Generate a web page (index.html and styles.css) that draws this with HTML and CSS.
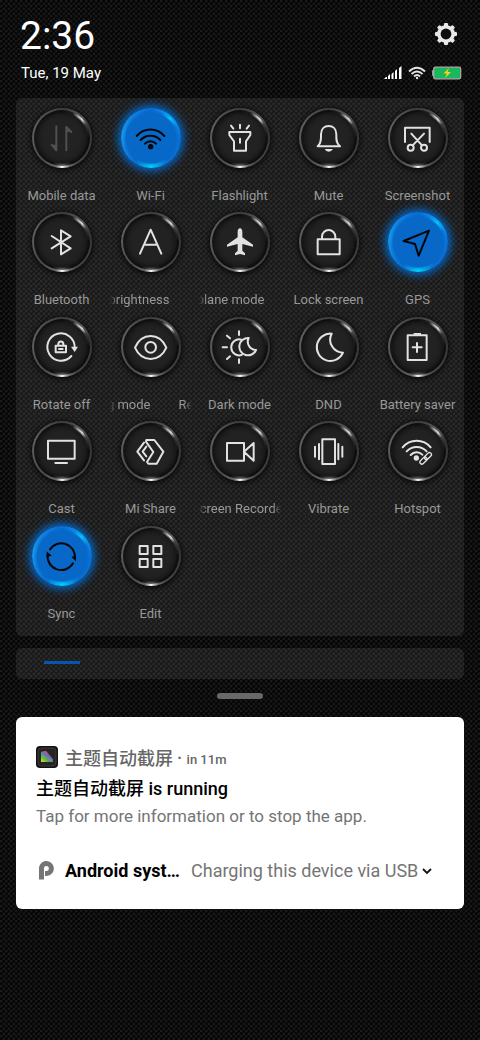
FILE: index.html
```html
<!DOCTYPE html>
<html lang="en">
<head>
<meta charset="utf-8">
<meta name="viewport" content="width=device-width, initial-scale=1">
<title>Control centre</title>
<link rel="stylesheet" href="styles.css">
</head>
<body>
<header class="status">
  <div class="status-row top">
    <h1 class="clock">2:36</h1>
    <button class="settings" type="button" aria-label="Settings">
      <svg viewBox="-12 -12 24 24" width="24" height="24">
        <g fill="#e8e8e8">
          <rect x="-2" y="-11" width="4" height="22" rx="1"/><rect x="-2" y="-11" width="4" height="22" rx="1" transform="rotate(45)"/><rect x="-2" y="-11" width="4" height="22" rx="1" transform="rotate(90)"/><rect x="-2" y="-11" width="4" height="22" rx="1" transform="rotate(135)"/>
          <circle r="9"/>
        </g>
        <circle r="5.400" fill="#0e0e0e"/>
      </svg>
    </button>
  </div>
  <div class="status-row">
    <p class="date">Tue, 19 May</p>
    <div class="indicators">
      <svg viewBox="0 0 18 14" width="18" height="14" fill="#fff"><path d="M0 13l2-2h1v2zM4 10l2-2v5H4zM7.500 8l2-2v7h-2zM11 5l2-2v10h-2zM15 2l2.500-2v13H15z"/></svg>
      <svg viewBox="0 0 18 14" width="18" height="14" fill="none" stroke="#e4e4e4" stroke-width="1.800"><path d="M1 5.500Q9-2 17 5.500M3.500 8Q9 3 14.500 8M6 10.500Q9 7.500 12 10.500"/><circle cx="9" cy="12" r="1.200" fill="#e4e4e4" stroke="none"/></svg>
      <svg viewBox="0 0 30 14" width="30" height="14"><rect x="0" y="4" width="3" height="6" rx="1" fill="#999"/><rect x="1.700" y="1.200" width="27" height="11.600" rx="1.500" fill="#19b85c" stroke="#b0aaa8" stroke-width="1.200"/><path d="M17 2l-5.500 5.500h3.500L13 12l6-6h-3.500z" fill="#ffd21e"/></svg>
    </div>
  </div>
</header>

<main>
<section class="panel tiles" aria-label="Quick settings">
  <button type="button" class="tile unavailable" aria-pressed="false"><span class="disc"><svg viewBox="-90 -90 180 180"><path d="M-17-35V37L-31 20M13 37V-33L28-18"/><path class="barb" d="M-31 20H-17V37ZM13-33L28-18H13Z"/></svg></span><span class="label">Mobile data</span></button>
  <button type="button" class="tile on" aria-pressed="true"><span class="disc"><svg viewBox="-90 -90 180 180"><path d="M-43-6A54 54 0 0 1 40-6M-31 6A41 41 0 0 1 28 6M-18 17A23 23 0 0 1 15 17"/><circle class="solid" cx="-1" cy="26" r="8"/></svg></span><span class="label">Wi-Fi</span></button>
  <button type="button" class="tile" aria-pressed="false"><span class="disc"><svg viewBox="-90 -90 180 180"><path d="M-32-18H31V-9L18 10V38H-18V10L-32-9ZM0 2V14M0-40V-29M-27-37L-20-28M27-37L20-28"/></svg></span><span class="label">Flashlight</span></button>
  <button type="button" class="tile" aria-pressed="false"><span class="disc"><svg viewBox="-90 -90 180 180"><path d="M-34 25C-22 14-24 2-24-11C-24-27-14-36-1-36S22-27 22-11C22 2 20 14 33 25Z"/><path class="solid" d="M-13 33H12Q7 41-1 41T-13 33"/></svg></span><span class="label">Mute</span></button>
  <button type="button" class="tile" aria-pressed="false"><span class="disc"><svg viewBox="-90 -90 180 180"><path d="M-39 12V-31H35V12M-16 22L18-13M12 22L-20-13"/><circle cx="-22" cy="29" r="9"/><circle cx="18" cy="29" r="9"/></svg></span><span class="label">Screenshot</span></button>

  <button type="button" class="tile" aria-pressed="false"><span class="disc"><svg viewBox="-90 -90 180 180"><path d="M-31-18L26 19L-3 37V-35L26-17L-31 19"/></svg></span><span class="label">Bluetooth</span></button>
  <button type="button" class="tile" aria-pressed="false"><span class="disc"><svg viewBox="-90 -90 180 180"><path d="M-33 35L-1-37L31 35M-21 8H19"/></svg></span><span class="label scrolling brightness"><span>Auto brightness</span></span></button>
  <button type="button" class="tile" aria-pressed="false"><span class="disc"><svg viewBox="-90 -90 180 180"><path class="solid" d="M0-41Q7-40 7-30V-14L39 8V14L7 6V26L15 34V40L0 36L-15 40V34L-7 26V6L-39 14V8L-7-14V-30Q-7-40 0-41"/></svg></span><span class="label scrolling airplane"><span>Airplane mode</span></span></button>
  <button type="button" class="tile" aria-pressed="false"><span class="disc"><svg viewBox="-90 -90 180 180"><path d="M-34-8H32V37H-34ZM-21-8V-16A20 20 0 0 1 19-16V-8"/></svg></span><span class="label">Lock screen</span></button>
  <button type="button" class="tile on" aria-pressed="true"><span class="disc"><svg viewBox="-90 -90 180 180"><path d="M33-34L-43-3L-9 6L2 41Z"/></svg></span><span class="label">GPS</span></button>

  <button type="button" class="tile" aria-pressed="false"><span class="disc"><svg viewBox="-90 -90 180 180"><path d="M38 2A41 41 0 1 0 28 27M-19-4H12V16H-19ZM-11-4V-9A7.500 7.500 0 0 1 4-9V-4M-9 6H2"/><path class="solid" d="M27-1H48L38 15Z"/></svg></span><span class="label">Rotate off</span></button>
  <button type="button" class="tile" aria-pressed="false"><span class="disc"><svg viewBox="-90 -90 180 180"><path d="M-48 2C-28-45 26-45 46 2C26 47-28 47-48 2Z"/><circle cx="-1" cy="1" r="16"/></svg></span><span class="label scrolling reading"><span>Reading mode</span><span class="next">Re</span></span></button>
  <button type="button" class="tile" aria-pressed="false"><span class="disc"><svg viewBox="-90 -90 180 180"><path d="M4-22A24 24 0 1 0 5 24M-3-47V-36M-3 37V48M-52 1H-39M-39-34L-30-26M-39 36L-30 28M26-27A26 26 0 1 0 48 9A25 25 0 0 1 26-27"/></svg></span><span class="label">Dark mode</span></button>
  <button type="button" class="tile" aria-pressed="false"><span class="disc"><svg viewBox="-90 -90 180 180"><path d="M8-40A41 41 0 1 0 42 17A39 39 0 0 1 8-40Z"/></svg></span><span class="label">DND</span></button>
  <button type="button" class="tile" aria-pressed="false"><span class="disc"><svg viewBox="-90 -90 180 180"><path d="M-31-35H26V39H-31ZM-3-12V15M-16 1H11"/><path class="solid" d="M-13-42H9V-34H-13Z"/></svg></span><span class="label">Battery saver</span></button>

  <button type="button" class="tile" aria-pressed="false"><span class="disc"><svg viewBox="-90 -90 180 180"><path d="M-42-31H38V23H-42ZM-20 36H15"/></svg></span><span class="label">Cast</span></button>
  <button type="button" class="tile" aria-pressed="false"><span class="disc"><svg viewBox="-90 -90 180 180"><path d="M-14-33H10L37 2L17 38H-8L-12 33L7 3L-15-28ZM-21-25L-41 2L-21 28M-14-13L-25 2L-14 16"/></svg></span><span class="label">Mi Share</span></button>
  <button type="button" class="tile" aria-pressed="false"><span class="disc"><svg viewBox="-90 -90 180 180"><path d="M-39-24H12V29H-39ZM12 2L41-24V29Z"/></svg></span><span class="label scrolling"><span>Screen Recorder</span></span></button>
  <button type="button" class="tile" aria-pressed="false"><span class="disc"><svg viewBox="-90 -90 180 180"><path d="M-20-35H18V39H-20ZM-30-21V25M-42-13V17M28-21V25M40-13V17"/></svg></span><span class="label">Vibrate</span></button>
  <button type="button" class="tile" aria-pressed="false"><span class="disc"><svg viewBox="-90 -90 180 180"><path d="M-46-11A54 54 0 0 1 38-11M-34 1A41 41 0 0 1 26 1M-22 12A24 24 0 0 1 13 11"/><circle class="solid" cx="-5" cy="21" r="8"/><g class="thin" transform="rotate(-45 23 22)"><rect x="1" y="16" width="25" height="12" rx="6"/><rect x="20" y="16" width="25" height="12" rx="6"/></g></svg></span><span class="label">Hotspot</span></button>

  <button type="button" class="tile on" aria-pressed="true"><span class="disc"><svg viewBox="-90 -90 180 180"><path d="M-36-20A41 41 0 0 1 39 5M33 22A41 41 0 0 1-43-4"/><path class="solid" d="M28 2L42 16V0ZM-46-14V2L-31-1Z"/></svg></span><span class="label">Sync</span></button>
  <button type="button" class="tile"><span class="disc"><svg viewBox="-90 -90 180 180"><path d="M-34-30H-10V-6H-34ZM7-30H31V-6H7ZM-34 9H-10V33H-34ZM7 9H31V33H7Z"/></svg></span><span class="label">Edit</span></button>
</section>

<section class="panel brightness-panel" aria-label="Brightness"><div class="level"></div></section>
<div class="handle"></div>

<section class="card" aria-label="Notifications">
  <article>
    <div class="app">
      <svg class="app-icon" viewBox="0 0 22 22" width="22" height="22">
        <defs><linearGradient id="rainbow" x1="0" y1="1" x2="1" y2="0"><stop offset="0" stop-color="#f0d838"/><stop offset=".3" stop-color="#58b840"/><stop offset=".5" stop-color="#2890c8"/><stop offset=".7" stop-color="#c040a0"/><stop offset="1" stop-color="#7030a0"/></linearGradient></defs>
        <rect width="22" height="22" rx="4" fill="#111"/><rect x="2" y="2" width="18" height="18" rx="3" fill="#242424" stroke="#3c3c3c"/><path d="M5 6l5-1 7 8v3H5z" fill="url(#rainbow)"/><path d="M5 6l5-1 3 4z" fill="#c050a0"/><path d="M6 9l10 6" stroke="#e07038"/>
      </svg>
      <span class="app-name">主题自动截屏</span><span class="app-time">· <small>in 11m</small></span>
    </div>
    <h2 class="title">主题自动截屏 is running</h2>
    <p class="text">Tap for more information or to stop the app.</p>
  </article>
  <button type="button" class="system">
    <svg viewBox="0 0 22 22" width="22" height="22" fill="none" stroke="#757575" stroke-width="5"><path d="M5.500 19.500V9.500A5 5 0 1 1 10.500 13.500H9"/></svg>
    <strong>Android system</strong>
    <span class="message">Charging this device via USB</span>
    <svg viewBox="0 0 10 10" width="10" height="10" fill="none" stroke="#111" stroke-width="1.800"><path d="M1 3l4 4 4-4"/></svg>
  </button>
</section>
</main>
</body>
</html>
```
FILE: styles.css
```css
* { box-sizing: border-box; }

body {
  margin: 0;
  min-height: 100vh;
  padding: 16px 16px 32px;
  font-family: Roboto, "Noto Sans CJK SC", sans-serif;
  color: #fff;
  background-color: #060606;
  background-image:
    radial-gradient(circle at 1px 1px, #242424 0, transparent 2px),
    radial-gradient(circle at 4px 4px, #242424 0, transparent 2px);
  background-size: 5px 5px;
}

h1, h2, p { margin: 0; font-weight: 400; }

button {
  padding: 0;
  border: 0;
  background: none;
  color: inherit;
  font: inherit;
}

svg { display: block; flex: none; }

.status { padding: 0 2px 0 4px; }

.status-row {
  display: flex;
  align-items: center;
  justify-content: space-between;
}

.clock { font-size: 39px; line-height: 40px; }
.top { align-items: flex-start; }
.settings { padding: 6px 4px 0 0; }
.date { padding-left: 1px; font-size: 15px; line-height: 18px; }
.status-row + .status-row { margin-top: 8px; }
.indicators { display: flex; gap: 6px; }

.panel {
  border-radius: 6px;
  background: rgba(255, 255, 255, .08);
}

.tiles {
  display: grid;
  grid-template-columns: repeat(5, minmax(0, 1fr));
  grid-template-rows: repeat(5, 1fr);
  min-height: 538px;
  margin-top: 16px;
  padding: 8px 2px 8px 1px;
}

.tile {
  display: flex;
  flex-direction: column;
  align-items: center;
  justify-content: flex-start;
  gap: 18px;
  padding-top: 2px;
}

.disc {
  position: relative;
  display: block;
  width: 60px;
  height: 60px;
  border-radius: 50%;
  background: conic-gradient(#3c3c3c, #5a5a5a 45deg, #333 70deg, #3c3c3c 110deg, #444 150deg, #666 165deg, #fff 180deg, #666 192deg, #484848 220deg, #606060 290deg, #3c3c3c);
  box-shadow: 0 1px 5px 1px #080808;
}

.disc::before,
.disc::after {
  content: "";
  position: absolute;
  border-radius: 50%;
}

.disc::before {
  inset: 2px;
  background: conic-gradient(#0c0c0c, #222 24deg, #ccc 38deg, #fff 48deg, #444 60deg, #0c0c0c 90deg, #0c0c0c 160deg, #666 180deg, #0c0c0c 200deg, #161616 270deg, #0c0c0c);
}

.disc::after {
  inset: 5px;
  background: #222;
  box-shadow: 0 0 2px 1px #181818, inset 0 0 4px 1px #141414;
}

.disc svg {
  position: relative;
  z-index: 1;
  width: 100%;
  height: 100%;
  fill: none;
  stroke: #e2e2e2;
  stroke-width: 6;
  stroke-linecap: round;
  stroke-linejoin: round;
}

.disc .solid { fill: #e2e2e2; stroke: none; }
.disc .thin { stroke-width: 4; }
.unavailable svg { stroke: #505050; }
.barb { fill: #505050; stroke: none; }

.on .disc {
  background: conic-gradient(#0a6cd8, #0aa0f8 45deg, #0870d8 90deg, #0870d8 150deg, #00d0ff 180deg, #0870d8 210deg, #1498f0 280deg, #0a6cd8);
  box-shadow: 0 0 9px 3px #0568c8;
}

.on .disc::before {
  background: conic-gradient(#0868d0, #0880e0 24deg, #00e0ff 45deg, #0878e0 66deg, #0868c8 140deg, #00c8f8 180deg, #0868c8 215deg, #1490e8 280deg, #0868d0);
}

.on .disc::after {
  background: #0868c8;
  box-shadow: 0 0 2px 1px #0868c8;
}

.on .disc svg { stroke: #050505; }
.on .disc .solid { fill: #050505; }

.label {
  color: #989898;
  font-size: 13px;
  line-height: 20px;
  white-space: nowrap;
}

.scrolling {
  display: flex;
  justify-content: center;
  width: 82px;
  overflow: hidden;
  -webkit-mask-image: linear-gradient(90deg, transparent, #000 8px, #000 74px, transparent);
  mask-image: linear-gradient(90deg, transparent, #000 8px, #000 74px, transparent);
}

.brightness { justify-content: flex-end; padding-right: 22px; }
.airplane { justify-content: flex-end; padding-right: 16px; }
.reading { justify-content: flex-end; gap: 28px; }
.next { width: 13px; }

.brightness-panel {
  height: 31px;
  margin-top: 12px;
  padding: 13px 28px;
}

.level {
  width: 36px;
  height: 3px;
  background: #0755b0;
}

.handle {
  width: 46px;
  height: 6px;
  margin: 14px auto 18px;
  border-radius: 3px;
  background: #696969;
}

.card {
  padding: 28px 28px 24px 20px;
  border-radius: 6px;
  background: #fff;
  color: #000;
}

.app {
  display: flex;
  align-items: center;
  height: 24px;
  color: #666;
}

.app-name { margin-left: 7px; font-size: 18px; font-weight: 500; }
.app-time { margin-left: 4px; font-size: 18px; font-weight: 500; }
.app-time small { font-size: 13px; }

.title {
  margin-top: 6px;
  font-size: 18px;
  font-weight: 500;
  line-height: 28px;
}

.text {
  color: #757575;
  font-size: 17px;
  line-height: 26px;
}

.system {
  display: flex;
  align-items: center;
  width: 100%;
  margin-top: 28px;
  font-size: 18px;
  line-height: 28px;
  text-align: left;
}

.system strong {
  width: 116px;
  margin: 0 10px 0 7px;
  overflow: hidden;
  font-weight: 700;
  text-overflow: ellipsis;
  white-space: nowrap;
}

.message {
  margin-right: 4px;
  color: #757575;
  white-space: nowrap;
}
```
